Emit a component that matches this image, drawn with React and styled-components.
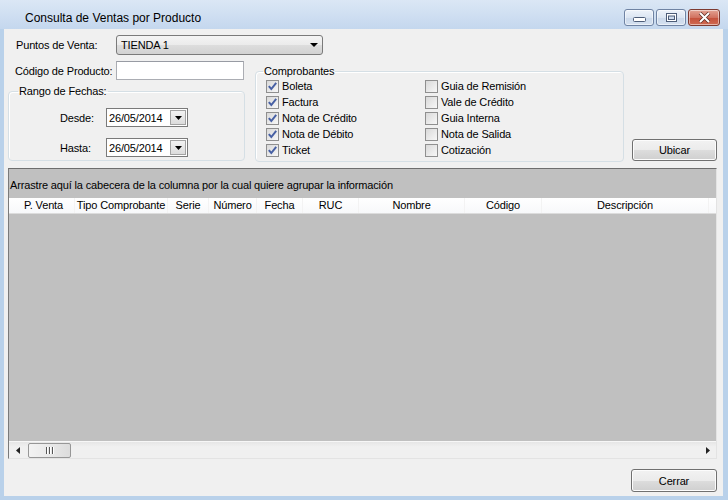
import React from "react";
import styled, { createGlobalStyle } from "styled-components";

const GlobalStyle = createGlobalStyle`
  * { box-sizing: border-box; }
  html, body { margin: 0; padding: 0; background: #b9d1ea; }
  body {
    font-family: "Liberation Sans", Arial, sans-serif;
    font-size: 11px;
    letter-spacing: -0.15px;
    color: #000;
  }
`;

const leftChecks = [
  "Boleta",
  "Factura",
  "Nota de Crédito",
  "Nota de Débito",
  "Ticket",
];
const rightChecks = [
  "Guia de Remisión",
  "Vale de Crédito",
  "Guia Interna",
  "Nota de Salida",
  "Cotización",
];

const columns = [
  { title: "P. Venta", width: 62 },
  { title: "Tipo Comprobante", width: 93 },
  { title: "Serie", width: 41 },
  { title: "Número", width: 48 },
  { title: "Fecha", width: 46 },
  { title: "RUC", width: 56 },
  { title: "Nombre", width: 106 },
  { title: "Código", width: 77 },
  { title: "Descripción", width: 167 },
];

function DownArrow({ w = 7, h = 4 }) {
  return (
    <svg width={w} height={h} viewBox={`0 0 ${w} ${h}`}>
      <polygon points={`0,0 ${w},0 ${w / 2},${h}`} fill="#000" />
    </svg>
  );
}

function CheckBox({ checked, label }) {
  return (
    <CheckRow>
      <Box>
        {checked && (
          <svg width="11" height="11" viewBox="0 0 11 11">
            <path
              d="M1.8 5.2 L4.3 8 L9.2 1.8"
              fill="none"
              stroke="#4760a4"
              strokeWidth="2"
            />
          </svg>
        )}
      </Box>
      <span>{label}</span>
    </CheckRow>
  );
}

function DateBox({ value }) {
  return (
    <DateField>
      <DateText>{value}</DateText>
      <DateBtn>
        <DownArrow w={7} h={4} />
      </DateBtn>
    </DateField>
  );
}

export default function App() {
  return (
    <>
      <GlobalStyle />
      <Window>
        <TitleBar>
          <Title>Consulta de Ventas por Producto</Title>
          <WinButtons>
            <WinBtn>
              <svg width="13" height="9" viewBox="0 0 13 9">
                <rect x="0.5" y="4.5" width="12" height="4" rx="1" fill="#fff" stroke="#4d5d78" />
              </svg>
            </WinBtn>
            <WinBtn>
              <svg width="11" height="9" viewBox="0 0 11 9">
                <rect x="0.5" y="0.5" width="10" height="8" fill="#fff" stroke="#4d5d78" />
                <rect x="2.5" y="3" width="6" height="3.5" fill="#cfdcee" stroke="#4d5d78" />
              </svg>
            </WinBtn>
            <WinBtn $close>
              <svg width="13" height="11" viewBox="0 0 13 11">
                <path d="M2 1 L11 10 M11 1 L2 10" stroke="#5b2a22" strokeWidth="3.4" />
                <path d="M2 1 L11 10 M11 1 L2 10" stroke="#fff" strokeWidth="2" />
              </svg>
            </WinBtn>
          </WinButtons>
        </TitleBar>

        <Client>
          <FieldRow>
            <FieldLabel $indent={8}>Puntos de Venta:</FieldLabel>
            <Combo>
              <span>TIENDA 1</span>
              <DownArrow w={8} h={4} />
            </Combo>
          </FieldRow>

          <MainRow>
            <LeftCol>
              <FieldRow $h={19}>
                <FieldLabel $indent={7}>Código de Producto:</FieldLabel>
                <TextBox />
              </FieldRow>
              <RangeGroup>
                <Legend $ml={9}>Rango de Fechas:</Legend>
                <DateRows>
                  <DateRow>
                    <DateLabel>Desde:</DateLabel>
                    <DateBox value="26/05/2014" />
                  </DateRow>
                  <DateRow>
                    <DateLabel>Hasta:</DateLabel>
                    <DateBox value="26/05/2014" />
                  </DateRow>
                </DateRows>
              </RangeGroup>
            </LeftCol>

            <CompGroup>
              <Legend $ml={7}>Comprobantes</Legend>
              <CheckGrid>
                <CheckCol>
                  {leftChecks.map((c) => (
                    <CheckBox key={c} label={c} checked />
                  ))}
                </CheckCol>
                <CheckCol>
                  {rightChecks.map((c) => (
                    <CheckBox key={c} label={c} />
                  ))}
                </CheckCol>
              </CheckGrid>
            </CompGroup>

            <UbicarButton $w={85} $h={22}>Ubicar</UbicarButton>
          </MainRow>

          <Grid>
            <GroupPanel>
              Arrastre aquí la cabecera de la columna por la cual quiere agrupar la
              información
            </GroupPanel>
            <HeaderRow>
              {columns.map((c) => (
                <HeaderCell key={c.title} $w={c.width}>
                  {c.title}
                </HeaderCell>
              ))}
            </HeaderRow>
            <GridBody />
            <HScroll>
              <ScrollArrow>
                <svg width="4" height="7" viewBox="0 0 4 7">
                  <polygon points="4,0 4,7 0,3.5" fill="#222" />
                </svg>
              </ScrollArrow>
              <Thumb>
                <Grip />
                <Grip />
                <Grip />
              </Thumb>
              <Spacer />
              <ScrollArrow>
                <svg width="4" height="7" viewBox="0 0 4 7">
                  <polygon points="0,0 0,7 4,3.5" fill="#222" />
                </svg>
              </ScrollArrow>
            </HScroll>
          </Grid>

          <Footer>
            <PushButton $w={86} $h={23}>Cerrar</PushButton>
          </Footer>
        </Client>
      </Window>
    </>
  );
}

// ventana
const Window = styled.div`
  width: 728px;
  height: 500px;
  display: flex;
  flex-direction: column;
  background: linear-gradient(#dbe7f5 0px, #c4d7ee 29px, #b9d1ea 29px);
`;

const TitleBar = styled.div`
  height: 29px;
  display: flex;
  align-items: flex-start;
`;

const Title = styled.div`
  padding: 11px 0 0 25px;
  font-size: 12px;
  line-height: 14px;
  letter-spacing: 0;
`;

const WinButtons = styled.div`
  margin: 9px 8px 0 auto;
  display: flex;
  gap: 2px;
`;

const WinBtn = styled.div`
  width: ${(p) => (p.$close ? 32 : 30)}px;
  height: 17px;
  border: 1px solid ${(p) => (p.$close ? "#7d3a30" : "#6f83a3")};
  border-radius: 3px;
  display: flex;
  align-items: center;
  justify-content: center;
  background: ${(p) =>
    p.$close
      ? "linear-gradient(#e3a393, #d17260 50%, #c4503b 51%, #cf6a52)"
      : "linear-gradient(#eef3fa, #dbe5f2 50%, #cad8ea 51%, #d5e1f0)"};
  box-shadow: inset 0 0 0 1px rgba(255, 255, 255, 0.5);
`;

// area cliente
const Client = styled.div`
  flex: 1;
  margin: 0 5px 4px 4px;
  padding: 6px 6px 4px 4px;
  background: #f0f0f0;
  display: flex;
  flex-direction: column;
`;

const FieldRow = styled.div`
  display: flex;
  align-items: center;
  height: ${(p) => p.$h || 20}px;
`;

const FieldLabel = styled.div`
  width: 108px;
  padding-left: ${(p) => p.$indent}px;
  white-space: nowrap;
`;

const Combo = styled.div`
  width: 207px;
  height: 20px;
  border: 1px solid #7a7a7a;
  border-radius: 3px;
  background: linear-gradient(#f4f4f4, #ebebeb 50%, #dddddd 51%, #d2d2d2);
  display: flex;
  align-items: center;
  justify-content: space-between;
  padding: 0 4px 0 4px;
`;

const TextBox = styled.div`
  width: 128px;
  height: 19px;
  background: #fff;
  border: 1px solid #abadb3;
  border-top-color: #989ba3;
`;

const MainRow = styled.div`
  margin-top: 6px;
  display: flex;
  align-items: flex-start;
`;

const LeftCol = styled.div`
  width: 237px;
  display: flex;
  flex-direction: column;
`;

const Legend = styled.legend`
  margin-left: ${(p) => p.$ml}px;
  padding: 0 1px;
  font-size: 11px;
  line-height: 13px;
`;

const GroupBox = styled.fieldset`
  margin: 0;
  padding: 0;
  min-inline-size: 0;
  border: 1px solid #d5dfe5;
  border-radius: 4px;
  box-shadow: inset 1px 1px 0 #fff;
`;

const RangeGroup = styled(GroupBox)`
  margin-top: 5px;
  height: 76px;
`;

const DateRows = styled.div`
  padding: 10px 0 0 51px;
  display: flex;
  flex-direction: column;
  gap: 11px;
`;

const DateRow = styled.div`
  display: flex;
  align-items: center;
  height: 19px;
`;

const DateLabel = styled.div`
  width: 46px;
`;

const DateField = styled.div`
  width: 82px;
  height: 19px;
  background: #fff;
  border: 1px solid #7a7a7a;
  display: flex;
  align-items: center;
  padding: 0 1px 0 2px;
`;

const DateText = styled.span`
  flex: 1;
`;

const DateBtn = styled.div`
  width: 16px;
  height: 15px;
  border: 1px solid #a3a3a3;
  background: linear-gradient(#f2f2f2, #dcdcdc);
  display: flex;
  align-items: center;
  justify-content: center;
`;

const CompGroup = styled(GroupBox)`
  margin: 4px 0 0 10px;
  width: 369px;
  height: 97px;
`;

const CheckGrid = styled.div`
  padding-left: 10px;
  display: grid;
  grid-template-columns: 159px 1fr;
`;

const CheckCol = styled.div`
  display: flex;
  flex-direction: column;
`;

const CheckRow = styled.div`
  height: 16px;
  display: flex;
  align-items: center;
  gap: 3px;
`;

const Box = styled.div`
  width: 13px;
  height: 13px;
  border: 1px solid #8f8f8f;
  background: linear-gradient(135deg, #d9d9d9, #f7f7f7);
  display: flex;
  align-items: center;
  justify-content: center;
`;

const PushButton = styled.div`
  width: ${(p) => p.$w}px;
  height: ${(p) => p.$h}px;
  border: 1px solid #707070;
  border-radius: 3px;
  background: linear-gradient(#f2f2f2, #ebebeb 50%, #dddddd 51%, #cfcfcf);
  box-shadow: inset 0 0 0 1px #fcfcfc;
  display: flex;
  align-items: center;
  justify-content: center;
`;

const UbicarButton = styled(PushButton)`
  align-self: flex-end;
  margin: 0 0 1px 8px;
`;

// grilla
const Grid = styled.div`
  margin-top: 6px;
  width: 709px;
  height: 291px;
  border: 1px solid #e3e3e3;
  border-top-color: #6d6d6d;
  border-left-color: #7a7a7a;
  display: flex;
  flex-direction: column;
  background: #c0c0c0;
`;

const GroupPanel = styled.div`
  height: 29px;
  padding: 10px 0 0 1px;
  line-height: 13px;
  white-space: nowrap;
`;

const HeaderRow = styled.div`
  height: 16px;
  display: flex;
  padding-left: 4px;
  background: linear-gradient(#ffffff, #f7f8fa);
  border-bottom: 1px solid #dcdcdc;
`;

const HeaderCell = styled.div`
  width: ${(p) => p.$w}px;
  text-align: center;
  line-height: 15px;
  border-right: 1px solid #f3f3f3;
`;

const GridBody = styled.div`
  flex: 1;
  background: #c0c0c0;
`;

const HScroll = styled.div`
  height: 17px;
  display: flex;
  align-items: center;
  background: linear-gradient(#e6e6e6, #f0f0f0 30%, #f0f0f0);
  border-top: 1px solid #f7f7f7;
`;

const ScrollArrow = styled.div`
  width: 17px;
  display: flex;
  justify-content: center;
`;

const Thumb = styled.div`
  margin-left: 2px;
  width: 43px;
  height: 15px;
  border: 1px solid #979797;
  border-radius: 2px;
  background: linear-gradient(90deg, #f3f3f3, #e9e9e9 50%, #dcdcdc);
  display: flex;
  align-items: center;
  justify-content: center;
  gap: 2px;
`;

const Grip = styled.div`
  width: 1px;
  height: 7px;
  background: #555;
  box-shadow: 1px 0 0 #fff;
`;

const Spacer = styled.div`
  flex: 1;
`;

const Footer = styled.div`
  margin-top: 10px;
  display: flex;
  justify-content: flex-end;
`;
